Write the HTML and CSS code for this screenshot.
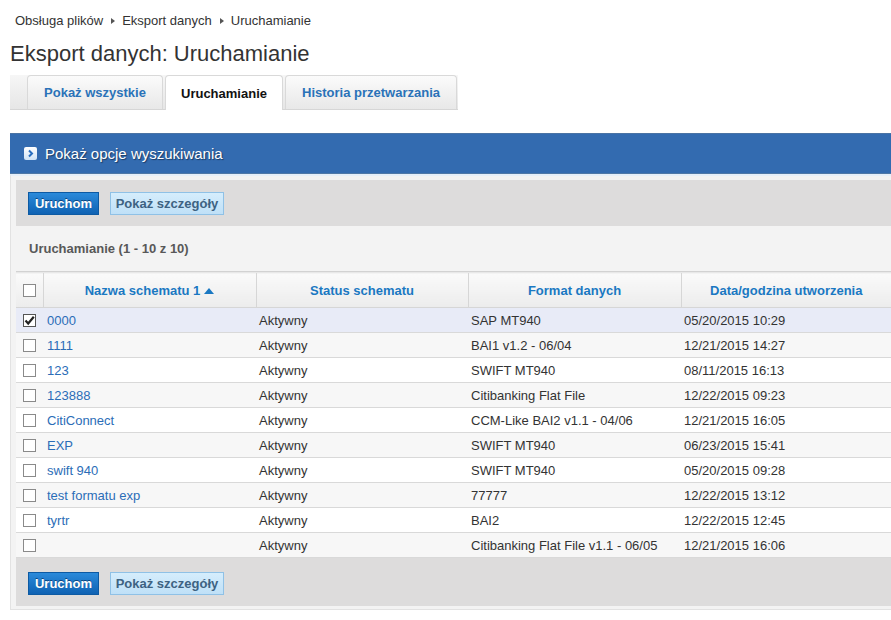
FILE: index.html
```html
<!DOCTYPE html>
<html lang="pl">
<head>
<meta charset="utf-8">
<title>Eksport danych: Uruchamianie</title>
<link rel="stylesheet" href="styles.css">
</head>
<body>
<div class="breadcrumb">
  <span>Obsługa plików</span><span class="sep"></span><span>Eksport danych</span><span class="sep"></span><span>Uruchamianie</span>
</div>
<h1 class="title">Eksport danych: Uruchamianie</h1>
<div class="tabs">
  <div class="tab">Pokaż wszystkie</div>
  <div class="tab active">Uruchamianie</div>
  <div class="tab">Historia przetwarzania</div>
</div>

<div class="panel">
  <div class="panel-head">
    <span class="chev"><svg width="13" height="13" viewBox="0 0 13 13"><path d="M5 3.5 L8 6.5 L5 9.5" fill="none" stroke="#2a6fbf" stroke-width="2"/></svg></span>
    <span class="head-text">Pokaż opcje wyszukiwania</span>
  </div>
  <div class="panel-body">
    <div class="toolbar">
      <button class="btn primary">Uruchom</button>
      <button class="btn secondary">Pokaż szczegóły</button>
    </div>
    <div class="info">Uruchamianie (1 - 10 z 10)</div>
    <table class="grid">
      <colgroup>
        <col class="c-check"><col class="c-name"><col class="c-status"><col class="c-format"><col>
      </colgroup>
      <thead>
        <tr>
          <th class="chk-cell"><span class="cb"></span></th>
          <th>Nazwa schematu 1<svg class="arrow" width="10" height="7" viewBox="0 0 10 7"><path d="M0 7 L5 1 L10 7 Z" fill="#1a78c2"/></svg></th>
          <th>Status schematu</th>
          <th>Format danych</th>
          <th>Data/godzina utworzenia</th>
        </tr>
      </thead>
      <tbody>
        <tr class="sel"><td class="chk-cell"><span class="cb checked"><svg width="11" height="11" viewBox="0 0 11 11"><path d="M1.5 5.5 L4.2 8.5 L9.8 1.8" fill="none" stroke="#222" stroke-width="2.2"/></svg></span></td><td class="link">0000</td><td>Aktywny</td><td>SAP MT940</td><td>05/20/2015 10:29</td></tr>
        <tr class="alt"><td class="chk-cell"><span class="cb"></span></td><td class="link">1111</td><td>Aktywny</td><td>BAI1 v1.2 - 06/04</td><td>12/21/2015 14:27</td></tr>
        <tr><td class="chk-cell"><span class="cb"></span></td><td class="link">123</td><td>Aktywny</td><td>SWIFT MT940</td><td>08/11/2015 16:13</td></tr>
        <tr class="alt"><td class="chk-cell"><span class="cb"></span></td><td class="link">123888</td><td>Aktywny</td><td>Citibanking Flat File</td><td>12/22/2015 09:23</td></tr>
        <tr><td class="chk-cell"><span class="cb"></span></td><td class="link">CitiConnect</td><td>Aktywny</td><td>CCM-Like BAI2 v1.1 - 04/06</td><td>12/21/2015 16:05</td></tr>
        <tr class="alt"><td class="chk-cell"><span class="cb"></span></td><td class="link">EXP</td><td>Aktywny</td><td>SWIFT MT940</td><td>06/23/2015 15:41</td></tr>
        <tr><td class="chk-cell"><span class="cb"></span></td><td class="link">swift 940</td><td>Aktywny</td><td>SWIFT MT940</td><td>05/20/2015 09:28</td></tr>
        <tr class="alt"><td class="chk-cell"><span class="cb"></span></td><td class="link">test formatu exp</td><td>Aktywny</td><td>77777</td><td>12/22/2015 13:12</td></tr>
        <tr><td class="chk-cell"><span class="cb"></span></td><td class="link">tyrtr</td><td>Aktywny</td><td>BAI2</td><td>12/22/2015 12:45</td></tr>
        <tr class="alt"><td class="chk-cell"><span class="cb"></span></td><td class="link"></td><td>Aktywny</td><td>Citibanking Flat File v1.1 - 06/05</td><td>12/21/2015 16:06</td></tr>
      </tbody>
    </table>
    <div class="toolbar bottom">
      <button class="btn primary">Uruchom</button>
      <button class="btn secondary">Pokaż szczegóły</button>
    </div>
  </div>
</div>
</body>
</html>
```

FILE: styles.css
```css
html, body {
  margin: 0;
  padding: 0;
  overflow: hidden;
  background: #fff;
}
body {
  font-family: "Liberation Sans", Arial, sans-serif;
  font-size: 13px;
  color: #333;
  width: 891px;
  height: 620px;
}
.breadcrumb {
  padding: 13px 0 0 15px;
  height: 15px;
  line-height: 15px;
  font-size: 13px;
  color: #333;
  display: flex;
  align-items: center;
}
.breadcrumb .sep {
  display: inline-block;
  width: 0;
  height: 0;
  border-left: 4px solid #555;
  border-top: 3px solid transparent;
  border-bottom: 3px solid transparent;
  margin: 0 7px 0 8px;
}
.title {
  margin: 13px 0 0 10px;
  font-size: 22px;
  font-weight: normal;
  line-height: 26px;
  height: 26px;
  color: #333;
}
.tabs {
  margin: 8px 0 0 10px;
  width: 448px;
  height: 35px;
  display: flex;
  align-items: flex-end;
  gap: 2px;
  padding-left: 17px;
  background: linear-gradient(#f6f6f6, #e6e6e6);
  border-bottom: 1px solid #d6d6d6;
  box-sizing: border-box;
}
.tab {
  height: 34px;
  box-sizing: border-box;
  border: 1px solid #d9d9d9;
  border-bottom: none;
  border-radius: 4px 4px 0 0;
  background: linear-gradient(#fbfbfb, #e8e8e8);
  color: #2a72b8;
  font-weight: bold;
  font-size: 13px;
  display: flex;
  align-items: center;
  justify-content: center;
}
.tab:nth-child(1) { width: 136px; }
.tab:nth-child(2) { width: 118px; }
.tab:nth-child(3) { width: 172px; }
.tab.active {
  background: #fff;
  color: #111;
  height: 35px;
  margin-bottom: -1px;
}
.panel {
  margin: 23px 0 0 10px;
}
.panel-head {
  height: 41px;
  background: #336bb0;
  border-top: 1px solid #4a73a4;
  border-bottom: 1px solid #4f78a6;
  box-sizing: border-box;
  display: flex;
  align-items: center;
  padding-left: 14px;
  gap: 8px;
}
.chev {
  width: 13px;
  height: 13px;
  border-radius: 2px;
  background: linear-gradient(#ffffff, #cfe3f6);
  display: flex;
}
.head-text {
  color: #fff;
  font-size: 15px;
  text-shadow: 1px 1px 1px #1c3b63;
}
.panel-body {
  border-top: 2px solid #e6eff9;
  background: #f3f3f3;
  border-left: 1px solid #e2e2e2;
  border-bottom: 1px solid #e2e2e2;
  padding: 4px 0 3px 5px;
}
.toolbar {
  background: #dddcdc;
  height: 46px;
  box-sizing: border-box;
  padding: 12px 0 0 12px;
  display: flex;
  gap: 11px;
  align-items: flex-start;
}
.toolbar.bottom {
  height: 48px;
  padding-top: 14px;
}
.btn {
  height: 23px;
  font-family: "Liberation Sans", Arial, sans-serif;
  font-weight: bold;
  font-size: 13px;
  padding: 0;
  box-sizing: border-box;
  cursor: pointer;
}
.btn.primary {
  width: 71px;
  color: #fff;
  background: linear-gradient(#2b8ada, #0f62b3);
  border: 1px solid #0d5aa3;
  text-shadow: 0 -1px 0 #0a4680;
}
.btn.secondary {
  width: 114px;
  color: #3d6282;
  background: linear-gradient(#d5edfc, #bfe0f7);
  border: 1px solid #8fc1e6;
}
.info {
  height: 45px;
  line-height: 45px;
  padding-left: 13px;
  font-weight: bold;
  color: #585858;
  border-bottom: 1px solid #d2d2d2;
}
.grid {
  width: 100%;
  border-collapse: collapse;
  table-layout: fixed;
  background: #fff;
}
.c-check { width: 27px; }
.c-name { width: 213px; }
.c-status { width: 212px; }
.c-format { width: 213px; }
.grid th {
  height: 34px;
  background: linear-gradient(#fafafa, #ececec);
  color: #1a78c2;
  font-weight: bold;
  font-size: 13px;
  text-align: center;
  border-left: 1px solid #d6d6d6;
  border-top: 1px solid #e8e8e8;
  border-bottom: 1px solid #d6d6d6;
  padding: 0;
}
.grid th:first-child { border-left: none; }
.grid th .arrow {
  margin-left: 4px;
  vertical-align: 1px;
}
.grid td {
  height: 24px;
  border-bottom: 1px solid #d9d9d9;
  padding: 0 0 0 3px;
  white-space: nowrap;
  overflow: hidden;
  font-size: 13px;
  color: #333;
}
.grid td.chk-cell, .grid th.chk-cell {
  padding: 0 0 0 7px;
  text-align: left;
}
.grid tr.alt td { background: #f7f7f7; }
.grid tr.sel td { background: #e8ebf7; }
.grid td.link { color: #2b6db7; padding-left: 4px; }
.cb {
  display: block;
  width: 13px;
  height: 13px;
  box-sizing: border-box;
  border: 1px solid #8a8a8a;
  background: #fff;
}
.cb.checked {
  border-color: #555;
  display: flex;
  align-items: center;
  justify-content: center;
}
.cb.checked svg { display: block; }
```
